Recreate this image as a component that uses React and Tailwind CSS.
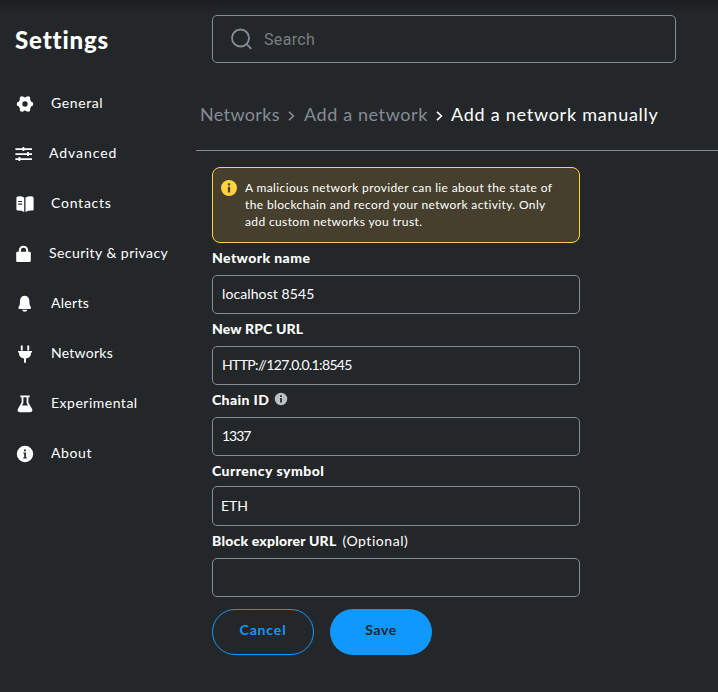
import React from "react";

function Svg({ children, size = 18, className = "" }) {
  return (
    <svg width={size} height={size} viewBox="0 0 18 18" fill="currentColor" className={`shrink-0 ${className}`}>
      {children}
    </svg>
  );
}

const Gear = () => (
  <Svg className="mt-0.5">
    <circle cx="9" cy="9" r="4.700" fill="none" stroke="currentColor" strokeWidth="4" />
    <circle cx="3" cy="9" r="2.300" />
    <circle cx="15" cy="9" r="2.300" />
    <circle cx="6" cy="3.500" r="2.300" />
    <circle cx="12" cy="3.500" r="2.300" />
    <circle cx="6" cy="14.500" r="2.300" />
    <circle cx="12" cy="14.500" r="2.300" />
  </Svg>
);
const Sliders = () => (
  <Svg className="mt-0.5 -ml-px mr-px">
    <path d="M.4 3.200h16.600v1.700H.4zM.4 8.200h16.600v1.700H.4zM.4 13.200h16.600v1.700H.4zM7.500 1.900h1.800v4.200H7.500zM12.100 6.900h1.800v4.200h-1.800zM3.500 11.900h1.800v4.200H3.500z" />
  </Svg>
);
const Book = () => (
  <Svg className="mt-0.5">
    <path fillRule="evenodd" d="M.4 2.900Q.4 1.600 1.700 1.400 5.300.9 8.200 2.600V16.900Q5.300 15.300 1.700 15.500.4 15.500.4 14.200zM2.300 6v1.100h3.800V6zM2.300 8.600v1.100h3.800V8.600zM9.500 2.600Q12.500.9 16.300 1.400 17.600 1.600 17.600 2.900v11.300q0 1.300-1.300 1.300Q12.500 15.300 9.500 16.900z" />
  </Svg>
);
const Lock = () => (
  <Svg className="mt-0.5">
    <path fillRule="evenodd" d="M2.800 6.800V5.400a4.700 4.700 0 0 1 9.400 0V6.800h1.300A1.300 1.300 0 0 1 14.800 8.100v7.600a1.300 1.300 0 0 1-1.300 1.300h-12A1.300 1.300 0 0 1 .2 15.700V8.100A1.300 1.300 0 0 1 1.500 6.800zm2.100 0h5.200V5.400a2.600 2.600 0 0 0-5.200 0z" />
  </Svg>
);
const Bell = () => (
  <Svg className="mt-0.5">
    <path d="M8.700.7C5.300.7 4 3.500 4 6.500c0 3-.4 3.800-1.200 5-1 1.600-.3 2.500.9 2.500h10c1.200 0 1.900-.9.900-2.500-.8-1.200-1.200-2-1.200-5C13.400 3.500 12.100.7 8.700.7zM6 14.800h5.400q-.7 2-2.700 2T6 14.800z" />
  </Svg>
);
const Plug = () => (
  <Svg className="mt-0.5">
    <path d="M4.800.5h1.900v5H4.800zM11.300.5h1.900v5h-1.900zM2 6h14v1.600h-1v1a5.100 5.100 0 0 1-5 5v4.200H8v-4.200a5.100 5.100 0 0 1-5-5v-1H2z" />
  </Svg>
);
const Flask = () => (
  <Svg className="mt-0.5">
    <path fillRule="evenodd" d="M4.300.6h9.400v1.600h-1.300v5.300l3.600 6.300c1 1.800.1 3.400-1.700 3.400H3.700c-1.800 0-2.700-1.600-1.700-3.400l3.600-6.300V2.200H4.300zM7.400 2.200v5.700L6 10.400h6l-1.400-2.500V2.200z" />
  </Svg>
);
const Info = ({ size = 18, className }) => (
  <Svg size={size} className={className}>
    <path fillRule="evenodd" d="M9 .8a8.200 8.200 0 1 0 0 16.400A8.200 8.200 0 0 0 9 .8zM8 4.400h1.900v1.800H8zM7.200 7.500h2.700v5h1v.9H7.100v-.9H8.200V8.400h-1z" />
  </Svg>
);
const Alert = ({ size = 18, className }) => (
  <Svg size={size} className={className}>
    <path fillRule="evenodd" d="M9 1a8 8 0 1 0 0 16A8 8 0 0 0 9 1zM7.900 4.300h2.200v2.200H7.900zM7.900 7.700h2.200v5.700H7.900z" />
  </Svg>
);
const Chevron = ({ className }) => (
  <svg width="7" height="10" viewBox="0 0 7 10" fill="none" stroke="currentColor" strokeWidth="1.600" className={`shrink-0 ${className}`}>
    <path d="M1 .9L5.400 5 1 9.100" />
  </svg>
);

const items = [
  { icon: <Gear />, label: "General", text: "tracking-[0.6px] pl-[17px]" },
  { icon: <Sliders />, label: "Advanced", text: "tracking-[0.95px] pl-[15px]" },
  { icon: <Book />, label: "Contacts", text: "tracking-[0.75px] pl-[17px]" },
  { icon: <Lock />, label: "Security & privacy", text: "tracking-[0.45px] pl-[15px]" },
  { icon: <Bell />, label: "Alerts", text: "tracking-[0.3px] pl-[17px]" },
  { icon: <Plug />, label: "Networks", text: "tracking-[0.25px] pl-[17px]" },
  { icon: <Flask />, label: "Experimental", text: "tracking-[0.5px] pl-[17px]" },
  { icon: <Info className="mt-0.5" />, label: "About", text: "tracking-[0.6px] pl-[17px]" },
];

function Field({ label, extra, children, input = "mt-[7px] h-[39px] pb-0.5 pl-[9px]" }) {
  return (
    <label className="mt-[5px] flex flex-col">
      <span className="flex h-5 items-center text-sm font-black">{label}{extra}</span>
      <span className={`flex items-center rounded-[5px] border border-[#848c96] text-sm ${input}`}>{children}</span>
    </label>
  );
}

export default function App() {
  return (
    <div className="flex h-[692px] w-[718px] overflow-hidden bg-[#24272a] bg-linear-to-b from-[#1b1e21] to-[#24272a] to-[14px] font-['Lato',sans-serif] text-white">
      <aside className="w-[196px] shrink-0">
        <h1 className="pt-[22px] pl-[15px] text-2xl leading-9 font-black tracking-[0.85px]">Settings</h1>
        <nav className="mt-5">
          {items.map((item) => (
            <div key={item.label} className="flex h-[50px] items-center pl-4 text-sm whitespace-nowrap">
              {item.icon}
              <span className={item.text}>{item.label}</span>
            </div>
          ))}
        </nav>
      </aside>
      <main className="w-[522px] shrink-0">
        <div className="mt-[15px] ml-4 flex h-12 w-[464px] items-center rounded-[5px] border border-[#848c96] pl-[17px] font-['Roboto',sans-serif] text-base text-[#7b7d80]">
          <svg width="22" height="22" viewBox="0 0 22 22" fill="none" stroke="#848c96" strokeWidth="1.800" className="mr-3">
            <circle cx="10.500" cy="10" r="8.500" />
            <path d="M16.300 15.800l5 5" />
          </svg>
          <span className="pt-0.5 tracking-[0.35px]">Search</span>
        </div>
        <div className="flex h-[88px] items-center border-b border-[#848c96] pt-3.5 pl-1 text-lg whitespace-nowrap text-[#848c96]">
          <span className="flex w-[104px] items-center tracking-[0.35px]">Networks<Chevron className="mt-1 ml-2" /></span>
          <span className="flex w-[147px] items-center tracking-[0.6px]">Add a network<Chevron className="mt-1 ml-2 text-white" /></span>
          <span className="tracking-[0.74px] text-white">Add a network manually</span>
        </div>
        <section className="mt-4 ml-4 w-[368px]">
          <div className="flex h-[76px] rounded-lg border border-[#ffd33d] bg-[#463f2d] pt-[11px] pl-[7px] text-xs leading-[17px]">
            <Alert className="text-[#ffd33d]" />
            <p className="ml-[7px] whitespace-nowrap tracking-[0.37px]">
              A malicious network provider can lie about the state of<br />
              the blockchain and record your network activity. Only<br />
              add custom networks you trust.
            </p>
          </div>
          <Field label={<span className="tracking-[0.42px]">Network name</span>}><span className="tracking-[0.1px]">localhost 8545</span></Field>
          <Field label={<span className="tracking-[0.14px]">New RPC URL</span>}><span className="tracking-[-0.64px]">HTTP://127.0.0.1:8545</span></Field>
          <Field label={<span className="tracking-[0.38px]">Chain ID</span>} extra={<Alert size={14} className="-mt-0.5 ml-[5px] text-[#bbc0c5]" />}><span className="tracking-[-1px]">1337</span></Field>
          <Field input="mt-[5px] h-10 pl-2" label={<span className="tracking-[0.48px]">Currency symbol</span>}>ETH</Field>
          <Field label={<span className="tracking-[0.2px]">Block explorer URL</span>} extra={<span className="ml-[6px] font-normal tracking-[0.55px]">(Optional)</span>} />
          <div className="mt-3 flex gap-4 text-sm font-bold">
            <button className="h-[46px] w-[102px] rounded-full border border-[#1098fc] pb-1 tracking-[0.85px] text-[#1098fc]">Cancel</button>
            <button className="h-[46px] w-[102px] rounded-full bg-[#1098fc] pb-1 tracking-[0.6px] text-[#24272a]">Save</button>
          </div>
        </section>
      </main>
    </div>
  );
}
